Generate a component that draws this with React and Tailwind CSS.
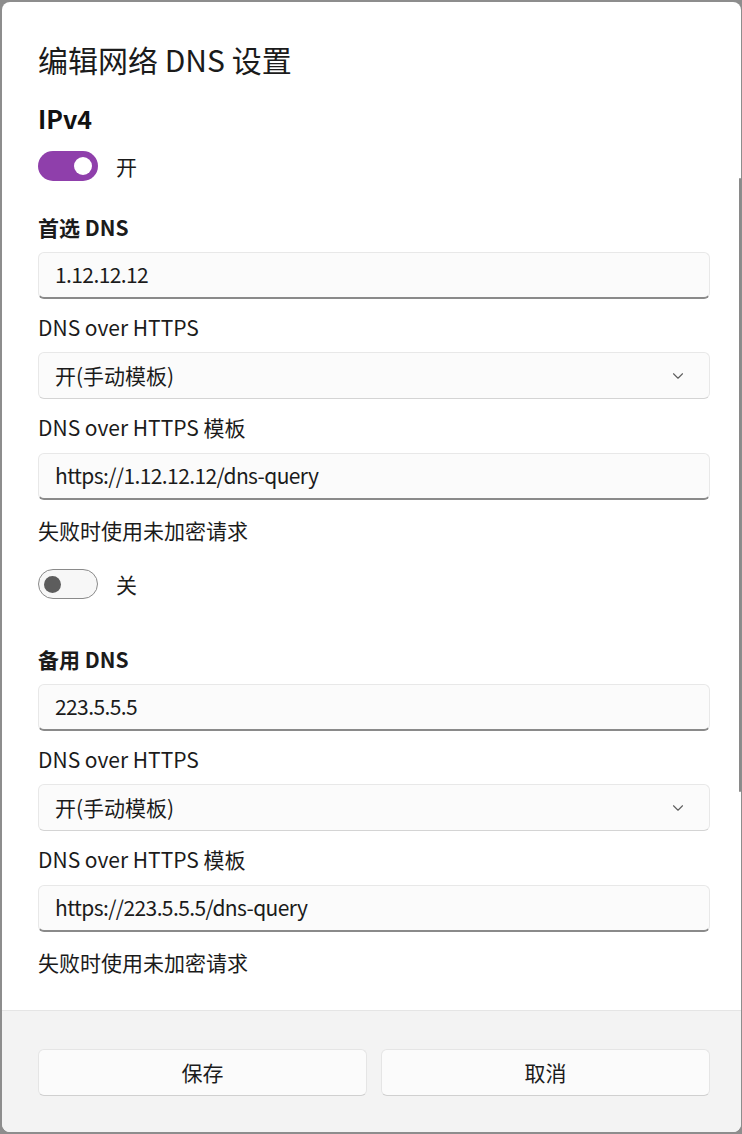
import { ChevronDown } from 'lucide-react';

const font = { fontFamily: '"Noto Sans CJK SC", "Noto Sans", sans-serif' };

const Toggle = ({ on, label }) => (
  <div className="flex items-center gap-[18px]">
    {on ? (
      <div className="flex h-[30px] w-[60px] items-center justify-end rounded-full bg-[#8f3fab] pr-[6px]">
        <div className="h-[18px] w-[18px] rounded-full bg-white" />
      </div>
    ) : (
      <div className="flex h-[30px] w-[60px] items-center rounded-full border-[1.5px] border-[#8a8a8a] bg-[#f7f7f7] pl-[5px]">
        <div className="h-[17px] w-[17px] rounded-full bg-[#5d5d5d]" />
      </div>
    )}
    <span className="text-[21px] leading-[28px] text-[#1b1b1b]">{label}</span>
  </div>
);

const Field = ({ value }) => (
  <div className="flex h-[47px] items-center rounded-[6px] border border-[#e8e8e8] border-b-[2px] border-b-[#8a8a8a] bg-[#fbfbfb] px-[16px] text-[21px] tracking-[-0.6px] text-[#1b1b1b]">
    {value}
  </div>
);

const Select = ({ value }) => (
  <div className="flex h-[47px] items-center justify-between rounded-[6px] border border-[#e8e8e8] border-b-[#d4d4d4] bg-[#fbfbfb] pl-[16px] pr-[22px] text-[21px] text-[#1b1b1b]">
    <span>{value}</span>
    <ChevronDown className="h-[18px] w-[18px] text-[#5f5f5f]" strokeWidth={1.5} />
  </div>
);

const Label = ({ children, strong }) => (
  <div className={`text-[21px] leading-[28px] text-[#1b1b1b] ${strong ? 'font-semibold' : ''}`}>{children}</div>
);

const DnsBlock = ({ title, ip, template, first }) => (
  <div className="flex flex-col">
    <Label strong>{title}</Label>
    <div className="mt-[11px]"><Field value={ip} /></div>
    <div className="mt-[14px]"><Label>DNS over HTTPS</Label></div>
    <div className="mt-[11px]"><Select value="开(手动模板)" /></div>
    <div className="mt-[14px]"><Label>DNS over HTTPS 模板</Label></div>
    <div className="mt-[12px]"><Field value={template} /></div>
    <div className="mt-[16px]"><Label>失败时使用未加密请求</Label></div>
    {first && (
      <div className="mt-[25px]"><Toggle on={false} label="关" /></div>
    )}
  </div>
);

const App = () => {
  return (
    <div className="h-[1134px] w-[742px] overflow-hidden bg-[#8d8d8d] pb-[2px] pl-[2px] pr-[1px] pt-[2px]" style={font}>
      <div className="relative flex h-full flex-col overflow-hidden rounded-[8px] bg-white">
        <div className="flex-1 overflow-hidden pl-[36px] pr-[31px]">
          <h1 className="mt-[38px] text-[30px] font-normal leading-[38px] text-[#1b1b1b]">编辑网络 DNS 设置</h1>
          <div className="mt-[24px] text-[25px] font-semibold leading-[32px] text-[#111]">IPv4</div>
          <div className="mt-[17px]"><Toggle on label="开" /></div>
          <div className="mt-[32px]">
            <DnsBlock title="首选 DNS" ip="1.12.12.12" template="https://1.12.12.12/dns-query" first />
          </div>
          <div className="mt-[46px]">
            <DnsBlock title="备用 DNS" ip="223.5.5.5" template="https://223.5.5.5/dns-query" />
          </div>
        </div>
        <div className="absolute right-0 top-[176px] h-[614px] w-[2px] rounded-full bg-[#8a8a8a]" />
        <div className="flex h-[122px] shrink-0 gap-[14px] border-t border-[#e5e5e5] bg-[#f3f3f3] pl-[36px] pr-[31px] pt-[38px]">
          <button className="h-[47px] flex-1 rounded-[6px] border border-[#e5e5e5] border-b-[#d0d0d0] bg-[#fbfbfb] text-[21px] text-[#1b1b1b]">保存</button>
          <button className="h-[47px] flex-1 rounded-[6px] border border-[#e5e5e5] border-b-[#d0d0d0] bg-[#fbfbfb] text-[21px] text-[#1b1b1b]">取消</button>
        </div>
      </div>
    </div>
  );
};

export default App;
